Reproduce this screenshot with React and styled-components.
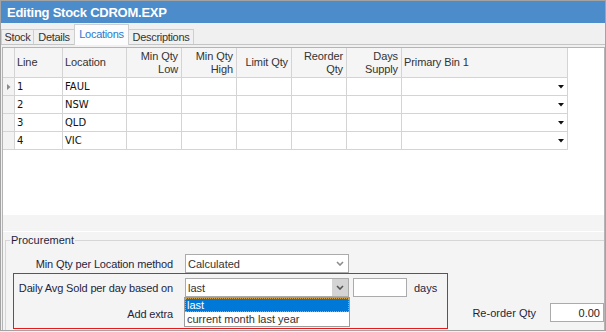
import React from 'react';
import styled, { createGlobalStyle } from 'styled-components';

const Global = createGlobalStyle`
  html, body { margin: 0; padding: 0; background: #f0f0f0; }
  body { font-family: "Liberation Sans", Arial, sans-serif; font-size: 11px; color: #1f1f3d; }
  * { box-sizing: border-box; }
`;

const Window = styled.div`
  width: 606px;
  height: 331px;
  border: 1px solid #a3a3a3;
  background: #f0f0f0;
  display: flex;
  flex-direction: column;
  overflow: hidden;
`;

const TitleBar = styled.div`
  flex: none;
  height: 22px;
  background: #4d8cca;
  color: #fff;
  font-weight: bold;
  font-size: 13px;
  letter-spacing: -0.25px;
  display: flex;
  align-items: center;
  padding-left: 6px;
`;

const TabStrip = styled.div`
  flex: none;
  height: 22px;
  border-bottom: 1px solid #c4c4c4;
  display: flex;
  align-items: flex-end;
`;

const Tab = styled.div`
  width: ${p => p.$w}px;
  height: ${p => (p.$active ? 21 : 15)}px;
  margin-left: ${p => (p.$first ? 0 : -1)}px;
  margin-bottom: ${p => (p.$active ? -1 : 0)}px;
  border: 1px solid #cfcfcf;
  border-bottom: none;
  background: ${p => (p.$active ? '#fcfcfc' : '#f0f0f0')};
  color: ${p => (p.$active ? '#2a78cf' : '#333')};
  display: flex;
  align-items: center;
  justify-content: center;
  padding-bottom: ${p => (p.$active ? 3 : 0)}px;
  font-size: 11px;
  letter-spacing: -0.3px;
  position: relative;
  z-index: ${p => (p.$active ? 1 : 0)};
`;

const Panel = styled.div`
  flex: 1;
  margin: 2px 0 0 1px;
  border: 1px solid #b4b4b4;
  border-bottom: none;
  display: flex;
  flex-direction: column;
  min-height: 0;
`;

const GridArea = styled.div`
  flex: none;
  height: 167px;
  background: #fff;
`;

const Grid = styled.div`
  display: grid;
  grid-template-columns: ${p => p.$cols};
  width: max-content;
`;

const HeaderCell = styled.div`
  height: 30px;
  background: #f5f5f5;
  border-right: 1px solid #d4d4d4;
  border-bottom: 1px solid #d4d4d4;
  display: flex;
  flex-direction: column;
  justify-content: center;
  align-items: ${p => (p.$align === 'right' ? 'flex-end' : 'flex-start')};
  padding: 0 3px 0 2px;
  color: #333;
  font-size: 11px;
  line-height: 13px;
  letter-spacing: -0.1px;
  white-space: nowrap;
`;

const DataCell = styled.div`
  height: 18px;
  background: ${p => (p.$indicator ? '#f3f3f3' : '#fff')};
  border-right: 1px solid #d4d4d4;
  border-bottom: 1px solid #d4d4d4;
  display: flex;
  align-items: center;
  justify-content: ${p => (p.$indicator ? 'center' : 'space-between')};
  padding: ${p => (p.$indicator ? '0' : '0 3px 0 2px')};
  font-family: "DejaVu Sans", Verdana, sans-serif;
  font-size: 10px;
  color: #111;
  white-space: nowrap;
`;

const Lower = styled.div`
  flex: 1;
  background: #f4f4f4;
  display: flex;
  flex-direction: column;
`;

const Splitter = styled.div`
  flex: none;
  height: 17px;
  border-bottom: 1px solid #ffffff;
`;

const Group = styled.fieldset`
  margin: 2px 0 0 2px;
  padding: 0;
  min-width: 0;
  border: 1px solid #d6d6d6;
  border-right: none;
  border-bottom: none;
  flex: 1;
`;

const Legend = styled.legend`
  margin-left: 4px;
  padding: 0 1px;
  line-height: 13px;
  font-size: 11px;
  color: #1f1f3d;
`;

const Row = styled.div`
  display: flex;
  align-items: center;
  height: 19px;
  margin-top: ${p => p.$mt || 0}px;
`;

const Label = styled.div`
  width: ${p => p.$w}px;
  flex: none;
  text-align: right;
  white-space: nowrap;
  letter-spacing: -0.15px;
  color: #1f1f3d;
`;

const Combo = styled.div`
  position: relative;
  margin-left: 12px;
  width: 164px;
  height: 19px;
  border: 1px solid #ababab;
  background: #fff;
  display: flex;
  align-items: center;
  padding-left: 2px;
  color: #333;
`;

const ComboText = styled.div`
  flex: 1;
  white-space: nowrap;
`;

const ComboButton = styled.div`
  width: 16px;
  height: 100%;
  display: flex;
  align-items: center;
  justify-content: center;
  background: ${p => (p.$pressed ? '#d4d4d4' : 'transparent')};
`;

const TextBox = styled.div`
  width: 54px;
  height: 19px;
  margin-left: ${p => p.$ml || 0}px;
  border: 1px solid #ababab;
  background: #fff;
  display: flex;
  align-items: center;
  justify-content: flex-end;
  padding-right: 3px;
  color: #222;
`;

const Unit = styled.div`
  margin-left: 7px;
  color: #1f1f3d;
`;

const Bottom = styled.div`
  display: flex;
  align-items: flex-start;
`;

const Highlight = styled.div`
  margin-left: 7px;
  width: 435px;
  height: 56px;
  border: 1px solid #e21c1c;
  flex: none;
`;

const Reorder = styled.div`
  margin-left: auto;
  margin-top: 30px;
  display: flex;
  align-items: center;
  height: 19px;
`;

const ReorderLabel = styled.div`
  color: #1f1f3d;
  white-space: nowrap;
`;

const DropList = styled.div`
  position: absolute;
  top: 18px;
  left: -2px;
  width: 166px;
  border: 1px solid #9c9c9c;
  background: #fff;
  z-index: 5;
`;

const DropItem = styled.div`
  height: 14px;
  line-height: 12px;
  padding-left: 1px;
  white-space: nowrap;
  background: ${p => (p.$selected ? '#0078d7' : '#fff')};
  color: ${p => (p.$selected ? '#fff' : '#333')};
  border: 1px dotted ${p => (p.$selected ? '#d9a040' : 'transparent')};
`;

const Chevron = ({ dark }) => (
  <svg width="8" height="5" viewBox="0 0 8 5">
    <path d="M1 1 L4 4 L7 1" fill="none" stroke={dark ? '#555' : '#8c8c8c'} strokeWidth="1.6" />
  </svg>
);

const DownArrow = () => (
  <svg width="6" height="4" viewBox="0 0 6 4">
    <polygon points="0,0 6,0 3,3.5" fill="#111" />
  </svg>
);

const RowMarker = () => (
  <svg width="4" height="6" viewBox="0 0 4 6">
    <polygon points="0,0 3.5,3 0,6" fill="#8a8a8a" />
  </svg>
);

const columns = [
  { w: 12, indicator: true },
  { w: 48, label: ['Line'], align: 'left', field: 'line' },
  { w: 64, label: ['Location'], align: 'left', field: 'loc' },
  { w: 55, label: ['Min Qty', 'Low'], align: 'right' },
  { w: 55, label: ['Min Qty', 'High'], align: 'right' },
  { w: 55, label: ['Limit Qty'], align: 'right' },
  { w: 55, label: ['Reorder', 'Qty'], align: 'right' },
  { w: 55, label: ['Days', 'Supply'], align: 'right' },
  { w: 166, label: ['Primary Bin 1'], align: 'left', dropdown: true },
];

const rows = [
  { line: '1', loc: 'FAUL', current: true },
  { line: '2', loc: 'NSW' },
  { line: '3', loc: 'QLD' },
  { line: '4', loc: 'VIC' },
];

const tabs = [
  { name: 'Stock', w: 33 },
  { name: 'Details', w: 42 },
  { name: 'Locations', w: 55, active: true },
  { name: 'Descriptions', w: 66 },
];

export default function App() {
  const cols = columns.map(c => `${c.w}px`).join(' ');
  return (
    <>
      <Global />
      <Window>
        <TitleBar>Editing Stock CDROM.EXP</TitleBar>
        <TabStrip>
          {tabs.map((t, i) => (
            <Tab key={t.name} $w={t.w} $active={t.active} $first={i === 0}>{t.name}</Tab>
          ))}
        </TabStrip>
        <Panel>
          <GridArea>
            <Grid $cols={cols}>
              {columns.map((c, i) => (
                <HeaderCell key={`h${i}`} $align={c.align}>
                  {(c.label || []).map(l => <span key={l}>{l}</span>)}
                </HeaderCell>
              ))}
              {rows.map(r =>
                columns.map((c, i) => (
                  <DataCell key={`${r.line}-${i}`} $indicator={c.indicator}>
                    {c.indicator && r.current ? <RowMarker /> : null}
                    {c.field ? <span>{r[c.field]}</span> : null}
                    {c.dropdown ? (<><span /><DownArrow /></>) : null}
                  </DataCell>
                ))
              )}
            </Grid>
          </GridArea>
          <Lower>
            <Splitter />
            <Group>
              <Legend>Procurement</Legend>
              <Row $mt={7}>
                <Label $w={167}>Min Qty per Location method</Label>
                <Combo>
                  <ComboText>Calculated</ComboText>
                  <ComboButton><Chevron /></ComboButton>
                </Combo>
              </Row>
              <Bottom>
                <Highlight>
                  <Row $mt={4}>
                    <Label $w={159}>Daily Avg Sold per day based on</Label>
                    <Combo>
                      <ComboText>last</ComboText>
                      <ComboButton $pressed><Chevron dark /></ComboButton>
                      <DropList>
                        <DropItem $selected>last</DropItem>
                        <DropItem>current month last year</DropItem>
                      </DropList>
                    </Combo>
                    <TextBox $ml={4} />
                    <Unit>days</Unit>
                  </Row>
                  <Row $mt={7}>
                    <Label $w={159}>Add extra</Label>
                  </Row>
                </Highlight>
                <Reorder>
                  <ReorderLabel>Re-order Qty</ReorderLabel>
                  <TextBox $ml={14}>0.00</TextBox>
                </Reorder>
              </Bottom>
            </Group>
          </Lower>
        </Panel>
      </Window>
    </>
  );
}
